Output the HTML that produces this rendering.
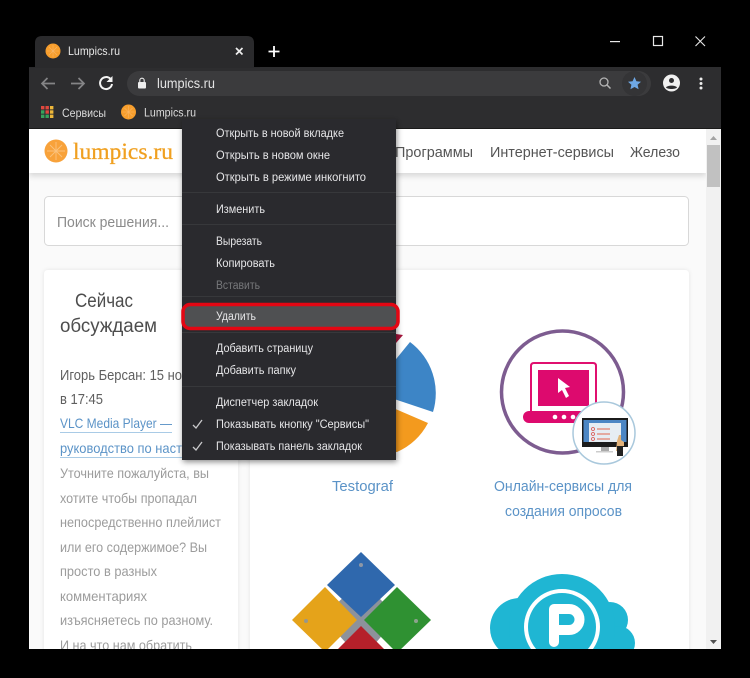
<!DOCTYPE html>
<html lang="ru">
<head>
<meta charset="utf-8">
<title>Lumpics.ru</title>
<style>
html,body{margin:0;padding:0;background:#000;width:750px;height:678px;overflow:hidden}
svg{display:block;filter:blur(.35px)}
text{font-family:"Liberation Sans","DejaVu Sans",sans-serif;white-space:pre}
.m{font-size:11.5px;fill:#e6e6e8}
.g{font-size:14px;fill:#9c9c9c}
.d{font-size:14.5px;fill:#5f5f5f}
.l{font-size:14px;fill:#5b93c7}
.n{font-size:14.5px;fill:#555}
</style>
</head>
<body>
<svg width="750" height="678" viewBox="0 0 750 678" xmlns="http://www.w3.org/2000/svg">
<defs>
<filter id="sh" x="-10%" y="-10%" width="120%" height="120%"><feDropShadow dx="1" dy="2" stdDeviation="3" flood-color="#000" flood-opacity=".45"/></filter>
<filter id="hs" x="-5%" y="-50%" width="110%" height="250%"><feDropShadow dx="0" dy="3" stdDeviation="3" flood-color="#000" flood-opacity=".14"/></filter>
<filter id="cs" x="-5%" y="-5%" width="110%" height="110%"><feDropShadow dx="0" dy="0" stdDeviation="2" flood-color="#000" flood-opacity=".09"/></filter>
</defs>
<rect width="750" height="678" fill="#000"/>

<!-- page -->
<rect x="29" y="129" width="692" height="520" fill="#fafafa"/>
<rect x="29" y="129" width="677" height="44" fill="#fff" filter="url(#hs)"/>

<!-- logo -->
<circle cx="56" cy="151" r="11.500" fill="#f8a23a"/>
<g stroke="#fbc27d" stroke-width=".9"><path d="M56 142v18M47 151h18M50 145l12 12M62 145l-12 12"/></g>
<text x="73" y="159" textLength="100" lengthAdjust="spacingAndGlyphs" style="font-family:'Liberation Serif',serif;font-size:23px;fill:#f0a020;stroke:#f0a020;stroke-width:.25">lumpics.ru</text>

<text class="n" x="395" y="157" textLength="78" lengthAdjust="spacingAndGlyphs">Программы</text>
<text class="n" x="490" y="157" textLength="124" lengthAdjust="spacingAndGlyphs">Интернет-сервисы</text>
<text class="n" x="630" y="157" textLength="50" lengthAdjust="spacingAndGlyphs">Железо</text>

<!-- search -->
<rect x="44.500" y="196.500" width="644" height="49" rx="4" fill="#fff" stroke="#d8d8d8"/>
<text x="57" y="227" textLength="112" lengthAdjust="spacingAndGlyphs" style="font-size:14.500px;fill:#8b8b8b">Поиск решения...</text>

<!-- cards -->
<rect x="44" y="270" width="194" height="400" rx="4" fill="#fff" filter="url(#cs)"/>
<rect x="250" y="270" width="439" height="400" rx="4" fill="#fff" filter="url(#cs)"/>

<text x="75" y="307" textLength="58" lengthAdjust="spacingAndGlyphs" style="font-size:19px;fill:#4d4d4d">Сейчас</text>
<text x="60" y="332" textLength="97" lengthAdjust="spacingAndGlyphs" style="font-size:19px;fill:#4d4d4d">обсуждаем</text>
<text class="d" x="60" y="380" textLength="122" lengthAdjust="spacingAndGlyphs">Игорь Берсан: 15 но</text>
<text class="d" x="60" y="404" textLength="43" lengthAdjust="spacingAndGlyphs">в 17:45</text>
<text class="l" x="60" y="428" textLength="112" lengthAdjust="spacingAndGlyphs">VLC Media Player —</text>
<rect x="60" y="432" width="112" height="1" fill="#a9cbe6"/>
<text class="l" x="60" y="453" textLength="122" lengthAdjust="spacingAndGlyphs">руководство по наст</text>
<rect x="60" y="457" width="122" height="1" fill="#a9cbe6"/>
<text class="g" x="60" y="478" textLength="149" lengthAdjust="spacingAndGlyphs">Уточните пожалуйста, вы</text>
<text class="g" x="60" y="503" textLength="137" lengthAdjust="spacingAndGlyphs">хотите чтобы пропадал</text>
<text class="g" x="60" y="527" textLength="161" lengthAdjust="spacingAndGlyphs">непосредственно плейлист</text>
<text class="g" x="60" y="552" textLength="147" lengthAdjust="spacingAndGlyphs">или его содержимое? Вы</text>
<text class="g" x="60" y="576" textLength="97" lengthAdjust="spacingAndGlyphs">просто в разных</text>
<text class="g" x="60" y="601" textLength="87" lengthAdjust="spacingAndGlyphs">комментариях</text>
<text class="g" x="60" y="625" textLength="153" lengthAdjust="spacingAndGlyphs">изъясняетесь по разному.</text>
<text class="g" x="60" y="650" textLength="132" lengthAdjust="spacingAndGlyphs">И на что нам обратить</text>

<!-- pie -->
<path d="M370 391 L410 342 A64 64 0 0 1 433 412 Z" fill="#3d85c6"/>
<path d="M370 398 L428 423 A65 65 0 0 1 397 452 L370 452 Z" fill="#f39a1e"/>
<path d="M396 334 L403 335 L396 343 Z" fill="#a5133a"/>

<text class="l" x="332" y="491" textLength="61" lengthAdjust="spacingAndGlyphs" style="font-size:14.500px">Testograf</text>
<text class="l" x="494" y="491" textLength="138" lengthAdjust="spacingAndGlyphs" style="font-size:14.500px">Онлайн-сервисы для</text>
<text class="l" x="505" y="516" textLength="117" lengthAdjust="spacingAndGlyphs" style="font-size:14.500px">создания опросов</text>

<!-- laptop icon -->
<circle cx="562.500" cy="392" r="61" fill="#fff" stroke="#7d5c90" stroke-width="3.500"/>
<path d="M531 411V366q0-3 3-3h59q3 0 3 3v44" fill="none" stroke="#e0106f" stroke-width="2"/>
<rect x="538" y="370" width="51" height="36" fill="#dd0a6e"/>
<rect x="523" y="411" width="80" height="12" rx="6" fill="#dd0a6e"/>
<circle cx="555" cy="417" r="2.300" fill="#fff"/><circle cx="564" cy="417" r="2.300" fill="#fff"/><circle cx="573" cy="417" r="2.300" fill="#fff"/>
<path d="M558 378L558 393L562 390L566 398L569 396L565 388L570 387Z" fill="#fff"/>
<circle cx="604" cy="433" r="31" fill="#fff" stroke="#a9c8dc" stroke-width="1.500"/>
<rect x="582" y="418" width="46" height="29" fill="#1b1b1b"/>
<rect x="583.500" y="420" width="43" height="22" fill="#4c86c4"/>
<rect x="589" y="423" width="32" height="19" fill="#e6edf3"/>
<g stroke="#e2684f" stroke-width="1"><path d="M597 429h13M597 434h13M597 439h13"/></g>
<circle cx="593" cy="429" r="1.500" fill="none" stroke="#d9534f" stroke-width=".8"/><circle cx="593" cy="434" r="1.500" fill="none" stroke="#d9534f" stroke-width=".8"/><circle cx="593" cy="439" r="1.500" fill="none" stroke="#d9534f" stroke-width=".8"/>
<rect x="601" y="447" width="8" height="4" fill="#aaa"/>
<rect x="596" y="451" width="17" height="1.500" fill="#ccc"/>
<path d="M617 441l2-6 2 0 0 5 3 2 0 4-3 0 0 5-5 0Z" fill="#e2b27a"/>
<rect x="617" y="446" width="6" height="10" fill="#222"/>

<!-- diamonds -->
<path d="M361 580L398 617L361 660L323 617Z" fill="#8d929b"/>
<path d="M361 552L395 585L361 617L327 585Z" fill="#2f68ad"/>
<path d="M325 587L357 620L325 652L292 620Z" fill="#e5a31a"/>
<path d="M397 587L431 620L397 653L364 620Z" fill="#2f9132"/>
<path d="M361 626L385 650L337 650Z" fill="#b5202a"/>
<circle cx="361" cy="565" r="2" fill="#8d97a6"/><circle cx="306" cy="621" r="2" fill="#97978a"/><circle cx="416" cy="621" r="2" fill="#8da38d"/>

<!-- cloud -->
<circle cx="520" cy="628" r="30" fill="#1fb6d3"/>
<circle cx="610" cy="620" r="18" fill="#1fb6d3"/>
<circle cx="618" cy="643" r="17" fill="#1fb6d3"/>
<rect x="505" y="632" width="113" height="28" fill="#1fb6d3"/>
<path d="M516 605A54 54 0 0 1 608 605" fill="none" stroke="#fff" stroke-width="2"/>
<circle cx="562" cy="627" r="53" fill="#1fb6d3"/>
<circle cx="562" cy="627" r="38" fill="#fff"/>
<circle cx="562" cy="627" r="34" fill="#1fb6d3"/>
<path d="M554 642V609H569A10.500 10.500 0 0 1 569 630H554" fill="none" stroke="#fff" stroke-width="10" stroke-linecap="round" stroke-linejoin="round"/>

<!-- scrollbar -->
<rect x="706" y="129" width="15" height="520" fill="#f1f1f1"/>
<rect x="707" y="145" width="13" height="42" fill="#c1c1c1"/>
<path d="M713.500 136l3.500 4h-7z" fill="#a3a3a3"/>
<path d="M713.500 644l3.500-4h-7z" fill="#505050"/>

<!-- bottom black clip -->
<rect x="0" y="649" width="750" height="29" fill="#000"/>
<rect x="0" y="129" width="29" height="549" fill="#000"/>
<rect x="721" y="129" width="29" height="549" fill="#000"/>

<!-- chrome -->
<rect x="29" y="67" width="692" height="62" fill="#2d2d2f"/>
<rect x="29" y="128" width="692" height="1" fill="#1a1a1a"/>
<path d="M29 67h6V43q0-7 7-7h205q7 0 7 7v24h6v1H29Z" fill="#2a2a2c"/>
<circle cx="53" cy="51" r="7.500" fill="#f79e2c"/>
<path d="M53 45v12M47 51h12M49 47l8 8M57 47l-8 8" stroke="#f9b564" stroke-width=".6"/>
<text x="68" y="55" textLength="52" lengthAdjust="spacingAndGlyphs" style="font-size:12px;fill:#e6e6e6">Lumpics.ru</text>
<path d="M236 48l6.500 6.500M242.500 48l-6.500 6.500" stroke="#eee" stroke-width="1.700"/>
<path d="M274 46v11M268.500 51.500h11" stroke="#fff" stroke-width="1.800"/>

<!-- window controls -->
<rect x="610" y="41" width="10" height="1.200" fill="#e8e8e8"/>
<rect x="653.500" y="36.500" width="9" height="9" fill="none" stroke="#e8e8e8" stroke-width="1.200"/>
<path d="M695.500 36.500l9.500 9.500M705 36.500l-9.500 9.500" stroke="#e8e8e8" stroke-width="1.100"/>

<!-- omnibox -->
<rect x="127" y="71" width="524" height="25" rx="12.500" fill="#3b3b3d"/>
<circle cx="634.500" cy="83.500" r="12.500" fill="#343436"/>
<path d="M55 83.500H42M47.500 78l-5.500 5.500 5.500 5.500" fill="none" stroke="#848486" stroke-width="1.700"/>
<path d="M71 83.500H84M78.500 78l5.500 5.500-5.500 5.500" fill="none" stroke="#848486" stroke-width="1.700"/>
<path d="M110.500 79a6 6 0 1 0 1.500 5" fill="none" stroke="#f4f4f4" stroke-width="2"/>
<path d="M112.500 76v6h-6z" fill="#f4f4f4"/>
<rect x="138" y="82" width="8" height="6.500" rx="1" fill="#eee"/>
<path d="M139.800 82v-1.600a2.200 2.200 0 0 1 4.400 0V82" fill="none" stroke="#eee" stroke-width="1.100"/>
<text x="157" y="88" textLength="58" lengthAdjust="spacingAndGlyphs" style="font-size:13.500px;fill:#e4e4e4">lumpics.ru</text>

<circle cx="604" cy="82" r="4" fill="none" stroke="#b5b5b5" stroke-width="1.300"/>
<path d="M607 85l3.500 3.500" stroke="#b5b5b5" stroke-width="1.500"/>
<path d="M634.500 77l1.900 4.200 4.600.5-3.400 3.100 1 4.500-4.100-2.300-4.100 2.300 1-4.500-3.400-3.100 4.600-.5z" fill="#6ea8e6"/>

<circle cx="671.500" cy="83" r="8.500" fill="#f0f0f0"/>
<circle cx="671.500" cy="80.500" r="2.500" fill="#2d2d2f"/>
<path d="M666 87.500c1.500-2.500 9.500-2.500 11 0c-1.500 2-9.500 2-11 0z" fill="#2d2d2f"/>
<circle cx="701" cy="79" r="1.500" fill="#eee"/><circle cx="701" cy="83.500" r="1.500" fill="#eee"/><circle cx="701" cy="88" r="1.500" fill="#eee"/>

<!-- bookmarks -->
<g>
<rect x="41" y="106" width="3.400" height="3.400" fill="#e0483e"/><rect x="45.500" y="106" width="3.400" height="3.400" fill="#e0483e"/><rect x="50" y="106" width="3.400" height="3.400" fill="#eeb73a"/>
<rect x="41" y="110.300" width="3.400" height="3.400" fill="#37a35c"/><rect x="45.500" y="110.300" width="3.400" height="3.400" fill="#e0483e"/><rect x="50" y="110.300" width="3.400" height="3.400" fill="#eeb73a"/>
<rect x="41" y="114.600" width="3.400" height="3.400" fill="#37a35c"/><rect x="45.500" y="114.600" width="3.400" height="3.400" fill="#37a35c"/><rect x="50" y="114.600" width="3.400" height="3.400" fill="#eeb73a"/>
</g>
<text x="62" y="117" textLength="44" lengthAdjust="spacingAndGlyphs" style="font-size:11.500px;fill:#dcdcdc">Сервисы</text>
<circle cx="128.500" cy="112" r="7.500" fill="#f79e2c"/>
<path d="M128.500 106v12M122.500 112h12M124.500 108l8 8M132.500 108l-8 8" stroke="#f9b564" stroke-width=".6"/>
<text x="144" y="116.500" textLength="52" lengthAdjust="spacingAndGlyphs" style="font-size:11.500px;fill:#dcdcdc">Lumpics.ru</text>

<!-- context menu -->
<rect x="182" y="119" width="214" height="341" fill="#292a2d" filter="url(#sh)"/>
<g fill="#37383b">
<rect x="182" y="192" width="214" height="1"/>
<rect x="182" y="224" width="214" height="1"/>
<rect x="182" y="386" width="214" height="1"/>
<rect x="182" y="296" width="214" height="1"/>
<rect x="182" y="332" width="214" height="1"/>
</g>
<text class="m" x="216" y="137" textLength="128" lengthAdjust="spacingAndGlyphs">Открыть в новой вкладке</text>
<text class="m" x="216" y="159" textLength="114" lengthAdjust="spacingAndGlyphs">Открыть в новом окне</text>
<text class="m" x="216" y="181" textLength="150" lengthAdjust="spacingAndGlyphs">Открыть в режиме инкогнито</text>
<text class="m" x="216" y="213" textLength="49" lengthAdjust="spacingAndGlyphs">Изменить</text>
<text class="m" x="216" y="245" textLength="46" lengthAdjust="spacingAndGlyphs">Вырезать</text>
<text class="m" x="216" y="267" textLength="59" lengthAdjust="spacingAndGlyphs">Копировать</text>
<text class="m" x="216" y="289" textLength="44" lengthAdjust="spacingAndGlyphs" style="fill:#77787b">Вставить</text>

<rect x="183" y="304.500" width="215" height="24" rx="7" fill="#4f5052" stroke="#e30613" stroke-width="3.500"/>
<text class="m" x="216" y="320" textLength="40" lengthAdjust="spacingAndGlyphs">Удалить</text>

<text class="m" x="216" y="352" textLength="97" lengthAdjust="spacingAndGlyphs">Добавить страницу</text>
<text class="m" x="216" y="374" textLength="80" lengthAdjust="spacingAndGlyphs">Добавить папку</text>
<text class="m" x="216" y="406" textLength="102" lengthAdjust="spacingAndGlyphs">Диспетчер закладок</text>
<text class="m" x="216" y="428" textLength="153" lengthAdjust="spacingAndGlyphs">Показывать кнопку "Сервисы"</text>
<text class="m" x="216" y="450" textLength="146" lengthAdjust="spacingAndGlyphs">Показывать панель закладок</text>
<path d="M193 425l3 3 6-8M193 447l3 3 6-8" fill="none" stroke="#c9c9cb" stroke-width="1.300"/>
</svg>
</body>
</html>
